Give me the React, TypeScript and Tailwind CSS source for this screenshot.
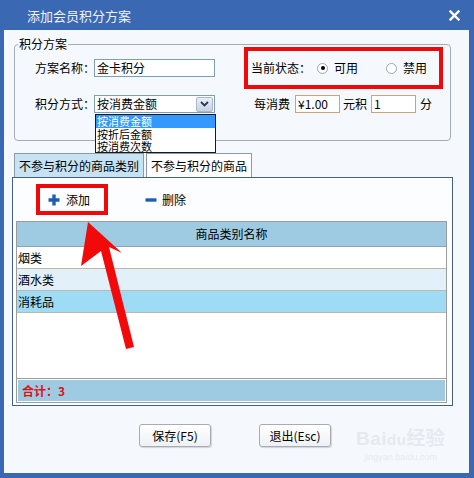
import React from "react";

const font = { fontFamily: '"Noto Sans CJK SC", "Liberation Sans", sans-serif' };

function Radio({ checked }: { checked?: boolean }) {
  return (
    <span className="w-[11px] h-[11px] rounded-full border border-[#9aa6b4] bg-white flex items-center justify-center shrink-0">
      {checked && <span className="w-[4px] h-[4px] rounded-full bg-black" />}
    </span>
  );
}

export default function App() {
  return (
    <div
      className="relative w-[474px] h-[478px] bg-[#3a68b3] flex flex-col overflow-hidden text-[12px] text-black"
      style={font}
    >
      {/* title bar */}
      <div className="h-[30px] flex items-center pl-[27px] pr-[14px] text-[13px] text-[#eef3fb] shrink-0">
        <span className="leading-none">添加会员积分方案</span>
        <svg className="ml-auto" width="11" height="11" viewBox="0 0 11 11">
          <path d="M1.5 1.5 L9.5 9.5 M9.5 1.5 L1.5 9.5" stroke="#ffffff" strokeWidth="2.4" strokeLinecap="square" />
        </svg>
      </div>

      {/* body */}
      <div className="ml-[4px] w-[465px] h-[443px] bg-[#f5f9fd] flex flex-col">
        {/* group box */}
        <fieldset className="ml-[10px] mt-[7px] w-[437px] h-[104px] border border-[#a4acb6] rounded-[4px] shrink-0">
          <legend className="ml-[3px] px-[1px] text-[12px] leading-[14px]">积分方案</legend>
          <div className="flex flex-col pl-[20px]">
            <div className="mt-[8px] h-[18px] flex items-center whitespace-nowrap">
              <span className="w-[59px]">方案名称：</span>
              <div className="w-[121px] h-[18px] border border-[#7f9db9] bg-white pl-[2px] flex items-center leading-none">
                金卡积分
              </div>
              <span className="ml-[36px] w-[66px]">当前状态：</span>
              <Radio checked />
              <span className="ml-[6px]">可用</span>
              <span className="ml-[28px]"><Radio /></span>
              <span className="ml-[6px]">禁用</span>
            </div>
            <div className="mt-[18px] h-[18px] flex items-center whitespace-nowrap">
              <span className="w-[59px]">积分方式：</span>
              <div className="relative w-[121px] h-[18px] border border-[#7f9db9] bg-white flex items-center">
                <span className="pl-[2px] leading-none">按消费金额</span>
                <div className="ml-auto mr-[1px] w-[17px] h-[15px] border border-[#a9b8cc] rounded-[2px] bg-gradient-to-b from-[#e8eef6] to-[#c7d3e3] flex items-center justify-center">
                  <svg width="9" height="6" viewBox="0 0 9 6">
                    <path d="M1 1 L4.5 4.5 L8 1" stroke="#2a3a4e" strokeWidth="1.8" fill="none" />
                  </svg>
                </div>
                {/* dropdown list */}
                <div className="absolute left-[0px] top-[18px] w-[121px] h-[39px] bg-white border border-[#1a1a1a] flex flex-col z-10 text-[11px]">
                  <div className="h-[13px] bg-[#3399ff] text-white leading-[13px] pl-[1px]">按消费金额</div>
                  <div className="h-[12px] leading-[12px] pl-[1px]">按折后金额</div>
                  <div className="h-[12px] leading-[12px] pl-[1px]">按消费次数</div>
                </div>
              </div>
              <span className="ml-[39px]">每消费</span>
              <div className="ml-[5px] w-[45px] h-[18px] border border-[#c9a37a] bg-white pl-[2px] flex items-center leading-none">
                ¥1.00
              </div>
              <span className="ml-[3px]">元积</span>
              <div className="ml-[4px] w-[45px] h-[18px] border border-[#c9a37a] bg-white pl-[2px] flex items-center leading-none">
                1
              </div>
              <span className="ml-[4px]">分</span>
            </div>
          </div>
        </fieldset>

        {/* tabs */}
        <div className="ml-[10px] mt-[12px] flex h-[24px] shrink-0">
          <div className="w-[130px] h-[24px] border border-b-0 border-[#8a9bb0] bg-[#c6e2f3] flex items-center justify-center">
            不参与积分的商品类别
          </div>
          <div className="ml-[2px] w-[106px] h-[24px] border border-b-0 border-[#8a9bb0] bg-white flex items-center justify-center">
            不参与积分的商品
          </div>
        </div>

        {/* panel */}
        <div className="ml-[8px] w-[441px] h-[229px] border border-[#45607c] bg-[#fbfdff] flex flex-col shrink-0">
          <div className="h-[43px] flex items-center pl-[35px] shrink-0">
            <svg width="12" height="12" viewBox="0 0 12 12">
              <path d="M6 0.5 V11.5 M0.5 6 H11.5" stroke="#1d5fae" strokeWidth="3.4" />
            </svg>
            <span className="ml-[6px]">添加</span>
            <svg className="ml-[55px]" width="12" height="12" viewBox="0 0 12 12">
              <path d="M0.5 6 H11.5" stroke="#1d5fae" strokeWidth="3.4" />
            </svg>
            <span className="ml-[5px]">删除</span>
          </div>
          <div className="ml-[3px] w-[431px] h-[182px] border border-[#9c9c9c] bg-white flex flex-col">
            <div className="h-[25px] bg-[#9ecbe1] border-b border-[#8aa4b4] flex items-center justify-center shrink-0">
              商品类别名称
            </div>
            <div className="h-[22px] bg-white border-b border-[#c4b5a6] flex items-center pl-[1px] shrink-0">烟类</div>
            <div className="h-[22px] bg-[#e1f0f9] border-b border-[#c4b5a6] flex items-center pl-[1px] shrink-0">酒水类</div>
            <div className="h-[22px] bg-[#9edcf6] border-b border-[#c4b5a6] flex items-center pl-[1px] shrink-0">消耗品</div>
            <div className="flex-1" />
            <div className="h-[24px] border-t border-[#9c9c9c] p-[1px] bg-white shrink-0">
              <div className="h-full bg-[#9ecbe1] flex items-center pl-[4px] text-[#e0101a] font-bold">
                合计：3
              </div>
            </div>
          </div>
        </div>

        {/* buttons */}
        <div className="mt-[18px] flex pl-[135px] relative">
          <button className="w-[72px] h-[23px] border border-[#a8acb2] rounded-[3px] bg-gradient-to-b from-white to-[#eef1f5] shadow-[1px_1px_1px_rgba(0,0,0,0.15)] text-[12px]">
            保存(F5)
          </button>
          <button className="ml-[48px] w-[72px] h-[23px] border border-[#a8acb2] rounded-[3px] bg-gradient-to-b from-white to-[#eef1f5] shadow-[1px_1px_1px_rgba(0,0,0,0.15)] text-[12px]">
            退出(Esc)
          </button>
        </div>
      </div>

      {/* watermark */}
      <div className="absolute left-[356px] top-[426px] flex flex-col items-center text-[#e6eaf0] pointer-events-none">
        <div className="text-[19px] font-bold leading-[22px] tracking-wide" style={{ fontFamily: '"Liberation Sans", sans-serif' }}>
          Bai<span className="text-[15px]">du</span><span style={font}>经验</span>
        </div>
        <div className="text-[9px] leading-[12px]" style={{ fontFamily: '"Liberation Sans", sans-serif' }}>
          jingyan.baidu.com
        </div>
      </div>

      {/* annotation: status red box */}
      <div className="absolute left-[244px] top-[47px] w-[199px] h-[42px] border-[4px] border-[#ee0a0a] pointer-events-none" />
      {/* annotation: add red box */}
      <div className="absolute left-[36px] top-[184px] w-[72px] h-[31px] border-[4px] border-[#ee0a0a] pointer-events-none" />
      {/* annotation arrow */}
      <svg className="absolute left-0 top-0 pointer-events-none" width="474" height="478" viewBox="0 0 474 478">
        <polygon
          points="88,222 122,253 109,247 134,347 126,349 101,251 81,266"
          fill="#f20a0a"
        />
      </svg>
    </div>
  );
}
